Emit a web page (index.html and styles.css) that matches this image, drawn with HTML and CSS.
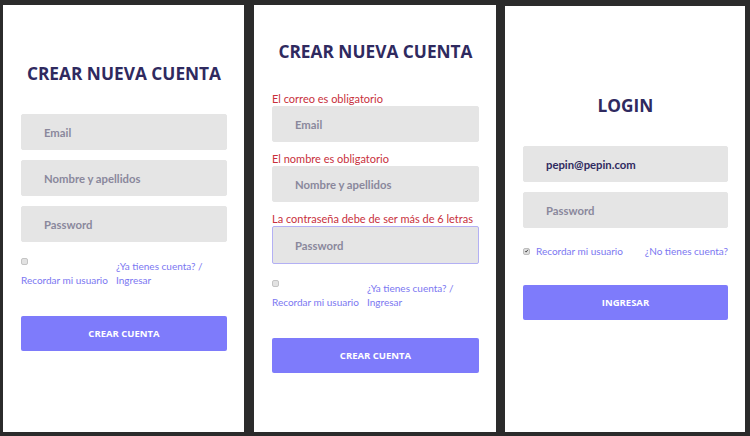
FILE: index.html
```html
<!DOCTYPE html>
<html lang="es">
<head>
<meta charset="utf-8">
<title>Registro y login</title>
<link rel="stylesheet" href="styles.css">
</head>
<body>
<main class="screens">
  <section class="panel panel--register">
    <h1 class="title">CREAR NUEVA CUENTA</h1>
    <form class="form">
      <div class="field"><input class="input" type="email" placeholder="Email"></div>
      <div class="field"><input class="input" type="text" placeholder="Nombre y apellidos"></div>
      <div class="field"><input class="input" type="password" placeholder="Password"></div>
      <div class="options options--stacked">
        <label class="remember remember--stacked"><span class="check"></span><span class="remember-text">Recordar mi usuario</span></label>
        <a class="link link--stacked" href="#">¿Ya tienes cuenta? / Ingresar</a>
      </div>
      <button class="button" type="button">CREAR CUENTA</button>
    </form>
  </section>

  <section class="panel panel--errors">
    <h1 class="title">CREAR NUEVA CUENTA</h1>
    <form class="form">
      <div class="field"><p class="error">El correo es obligatorio</p><input class="input" type="email" placeholder="Email"></div>
      <div class="field"><p class="error">El nombre es obligatorio</p><input class="input" type="text" placeholder="Nombre y apellidos"></div>
      <div class="field"><p class="error">La contraseña debe de ser más de 6 letras</p><input class="input input--focus" type="password" placeholder="Password"></div>
      <div class="options options--stacked">
        <label class="remember remember--stacked"><span class="check"></span><span class="remember-text">Recordar mi usuario</span></label>
        <a class="link link--stacked" href="#">¿Ya tienes cuenta? / Ingresar</a>
      </div>
      <button class="button" type="button">CREAR CUENTA</button>
    </form>
  </section>

  <section class="panel panel--login">
    <h1 class="title">LOGIN</h1>
    <form class="form">
      <div class="field"><input class="input input--filled" type="email" value="pepin@pepin.com"></div>
      <div class="field"><input class="input" type="password" placeholder="Password"></div>
      <div class="options options--inline">
        <label class="remember"><span class="check check--on"><svg viewBox="0 0 8 8" width="8" height="8"><path d="M1.8 4.3 L3.3 5.8 L6.3 2" fill="none" stroke="#333" stroke-width="1.4"/></svg></span><span class="remember-text">Recordar mi usuario</span></label>
        <a class="link" href="#">¿No tienes cuenta?</a>
      </div>
      <button class="button button--login" type="button">INGRESAR</button>
    </form>
  </section>
</main>
</body>
</html>
```

FILE: styles.css
```css
* { box-sizing: border-box; }

html, body {
  margin: 0;
  padding: 0;
  background: #2b2b2b;
  font-family: Lato, "Open Sans", sans-serif;
}

.screens {
  display: flex;
  align-items: flex-start;
  gap: 10px;
  padding: 5px 0 0 3px;
  height: 436px;
}

.panel {
  width: 241px;
  height: 427px;
  background: #ffffff;
  display: flex;
  flex-direction: column;
  justify-content: center;
  padding: 0 17px 23px 18px;
}

.panel--errors { width: 242px; }

.panel--login {
  width: 240px;
  height: 426px;
  margin-top: 1px;
  margin-left: -1px;
}

.title {
  margin: 0 0 29px;
  text-align: center;
  font-family: "Open Sans", Lato, sans-serif;
  font-size: 17.3px;
  line-height: 22px;
  font-weight: 700;
  color: #2f2a5f;
}

.form {
  display: flex;
  flex-direction: column;
}

.field + .field { margin-top: 10px; }

.error {
  margin: 0;
  font-size: 11px;
  line-height: 14px;
  color: #c8303c;
}

.input {
  display: block;
  width: 100%;
  height: 36px;
  border: 1px solid #e5e5e5;
  border-radius: 2px;
  background: #e5e5e5;
  padding: 0 0 0 22px;
  font-family: inherit;
  font-size: 11.3px;
  font-weight: 700;
  color: #2f2a5f;
  outline: none;
}

.input::placeholder { color: #8a889c; }

.input--focus {
  border-color: #b3b0f4;
  height: 38px;
}

.options {
  margin-top: 17px;
  font-size: 10px;
  line-height: 14px;
}

.options--stacked {
  display: flex;
}

.options--inline {
  display: flex;
  justify-content: space-between;
  align-items: center;
  margin-top: 16px;
}

.remember {
  display: flex;
  align-items: center;
  gap: 6px;
  color: #7b77f1;
}

.remember--stacked {
  flex-direction: column;
  align-items: flex-start;
  gap: 0;
  width: 95px;
  flex: none;
}

.remember--stacked .check { margin: -1px 0 8px; }

.check {
  display: inline-flex;
  width: 7px;
  height: 7px;
  border: 1px solid #c4c4c4;
  border-radius: 2px;
  background: #e2e2e2;
  align-items: center;
  justify-content: center;
  flex: none;
}

.check svg { display: block; width: 6px; height: 6px; }

.check--on { background: #dedede; border-color: #bdbdbd; }

.link {
  color: #7b77f1;
  text-decoration: none;
}

.link--stacked { max-width: 100px; }

.button {
  margin-top: 29px;
  height: 35px;
  border: none;
  border-radius: 2px;
  background: #7e7bfb;
  color: #ffffff;
  font-family: "Open Sans", Lato, sans-serif;
  font-size: 9.5px;
  font-weight: 700;
}

.button--login { margin-top: 27px; }
```
